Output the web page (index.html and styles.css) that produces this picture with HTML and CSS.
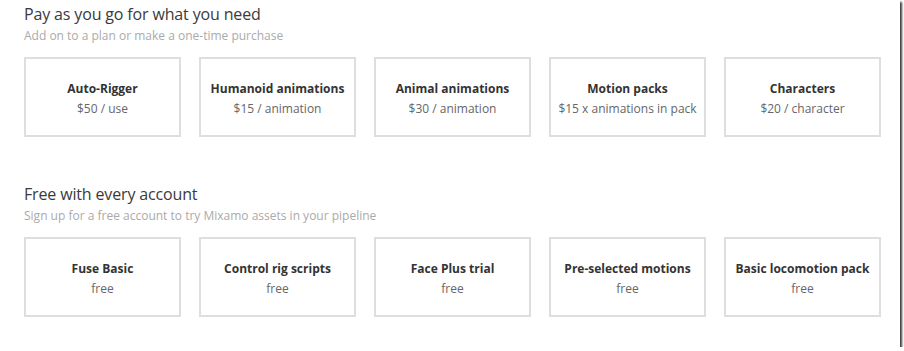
FILE: index.html
```html
<!DOCTYPE html>
<html lang="en">
<head>
    <meta charset="UTF-8">
    <meta name="viewport" content="width=device-width, initial-scale=1.0">
    <title>Pricing</title>
    <link rel="stylesheet" href="styles.css">
</head>
<body>
    <div class="frame">
        <section class="plan-group">
            <h2>Pay as you go for what you need</h2>
            <p class="sub">Add on to a plan or make a one-time purchase</p>
            <div class="card-row">
                <div class="card"><strong>Auto-Rigger</strong><span>$50 / use</span></div>
                <div class="card"><strong>Humanoid animations</strong><span>$15 / animation</span></div>
                <div class="card"><strong>Animal animations</strong><span>$30 / animation</span></div>
                <div class="card"><strong>Motion packs</strong><span>$15 x animations in pack</span></div>
                <div class="card"><strong>Characters</strong><span>$20 / character</span></div>
            </div>
        </section>

        <section class="plan-group free">
            <h2>Free with every account</h2>
            <p class="sub">Sign up for a free account to try Mixamo assets in your pipeline</p>
            <div class="card-row">
                <div class="card"><strong>Fuse Basic</strong><span>free</span></div>
                <div class="card"><strong>Control rig scripts</strong><span>free</span></div>
                <div class="card"><strong>Face Plus trial</strong><span>free</span></div>
                <div class="card"><strong>Pre-selected motions</strong><span>free</span></div>
                <div class="card"><strong>Basic locomotion pack</strong><span>free</span></div>
            </div>
        </section>
    </div>
</body>
</html>
```

FILE: styles.css
```css
* {
    box-sizing: border-box;
    margin: 0;
    padding: 0;
}

body {
    font-family: "Open Sans", "Noto Sans", sans-serif;
    background-color: #fff;
    color: #333;
}

.frame {
    width: 900px;
    height: 347px;
    padding: 3px 0 0 24px;
    background-color: #fff;
    box-shadow: 2px 2px 2px #3a3a3a;
}

.plan-group h2 {
    font-size: 16px;
    font-weight: normal;
    line-height: 22px;
    letter-spacing: -0.15px;
    color: #3a3a3a;
}

.plan-group .sub {
    font-size: 12px;
    line-height: 18px;
    color: #aaa;
    margin-top: 2px;
}

.plan-group.free {
    margin-top: 46px;
}

.card-row {
    display: flex;
    gap: 18px;
    margin-top: 12px;
}

.card {
    width: 157px;
    height: 80px;
    border: 2px solid #dedede;
    display: flex;
    flex-direction: column;
    align-items: center;
    justify-content: center;
    text-align: center;
    gap: 3px;
    padding-top: 2px;
}

.card strong {
    font-size: 12px;
    font-weight: bold;
    color: #333;
}

.card span {
    font-size: 12px;
    color: #666;
}
```
